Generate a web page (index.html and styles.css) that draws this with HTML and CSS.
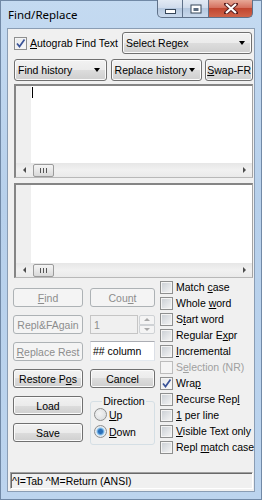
FILE: index.html
```html
<!DOCTYPE html>
<html lang="en">
<head>
  <meta charset="UTF-8">
  <meta name="viewport" content="width=device-width, initial-scale=1.0">
  <title>Find/Replace</title>
  <link rel="stylesheet" href="styles.css">
</head>
<body>
  <div class="window">
    <div class="titlebar">
      <span class="title">Find/Replace</span>
      <div class="caption">
        <span class="cap-btn cap-min">
          <svg width="11" height="5" viewBox="0 0 11 5"><rect x="0.5" y="0.5" width="10" height="4" fill="#fff" stroke="#364659"/></svg>
        </span>
        <span class="cap-btn cap-max">
          <svg width="12" height="10" viewBox="0 0 12 10"><rect x="0.5" y="0.5" width="11" height="9" fill="#364659"/><rect x="1.5" y="1.5" width="9" height="7" fill="#fff"/><rect x="3.5" y="4" width="5" height="3" fill="#5b6c80"/></svg>
        </span>
        <span class="cap-btn cap-close">
          <svg width="14" height="11" viewBox="0 0 14 11"><path d="M2 1 L12 10 M12 1 L2 10" stroke="#5a2020" stroke-width="4" stroke-linecap="square"/><path d="M2 1 L12 10 M12 1 L2 10" stroke="#fff" stroke-width="2.2"/></svg>
        </span>
      </div>
    </div>

    <div class="client">
      <div class="row-top">
        <label class="check">
          <span class="box checked"><svg width="11" height="11" viewBox="0 0 11 11"><path d="M2 5.5 L4.5 8.5 L9.5 1.5" fill="none" stroke="#3a5398" stroke-width="1.7"/></svg></span>
          <span><u>A</u>utograb Find Text</span>
        </label>
        <div class="combo combo-regex">Select Regex<span class="arrow"></span></div>
      </div>

      <div class="row-history">
        <div class="combo combo-find">Find history<span class="arrow"></span></div>
        <div class="combo combo-repl">Replace history<span class="arrow"></span></div>
        <div class="btn btn-swap"><span><u>S</u>wap-FR</span></div>
      </div>

      <div class="edit edit-find">
        <div class="edit-body">
          <div class="gutter"></div>
          <div class="text"><span class="caret"></span></div>
        </div>
        <div class="hscroll">
          <span class="sb-arrow"><span class="tri-left"></span></span>
          <span class="sb-thumb"><span class="grip"></span></span>
          <span class="sb-track"></span>
          <span class="sb-arrow"><span class="tri-right"></span></span>
        </div>
      </div>

      <div class="edit edit-repl">
        <div class="edit-body">
          <div class="gutter"></div>
          <div class="text"></div>
        </div>
        <div class="hscroll">
          <span class="sb-arrow"><span class="tri-left"></span></span>
          <span class="sb-thumb"><span class="grip"></span></span>
          <span class="sb-track"></span>
          <span class="sb-arrow"><span class="tri-right"></span></span>
        </div>
      </div>

      <div class="lower">
        <div class="actions">
          <div class="btn disabled"><span><u>F</u>ind</span></div>
          <div class="btn disabled"><span>Cou<u>n</u>t</span></div>

          <div class="btn disabled"><span>Repl&amp;FAgain</span></div>
          <div class="spinner">
            <span class="spin-input">1</span>
            <span class="spin-arrows">
              <span class="spin-up"><span class="tri-up"></span></span>
              <span class="spin-down"><span class="tri-down"></span></span>
            </span>
          </div>

          <div class="btn disabled"><span><u>R</u>eplace Rest</span></div>
          <div class="textbox">## column</div>

          <div class="btn"><span>Restore P<u>o</u>s</span></div>
          <div class="btn"><span>Cancel</span></div>

          <div class="btn"><span>Load</span></div>
          <fieldset class="direction">
            <legend>Direction</legend>
            <label class="radio"><span class="dot"></span><span><u>U</u>p</span></label>
            <label class="radio"><span class="dot selected"></span><span><u>D</u>own</span></label>
          </fieldset>

          <div class="btn"><span>Save</span></div>
        </div>

        <div class="options">
          <label class="check opt"><span class="box"></span><span>Match <u>c</u>ase</span></label>
          <label class="check opt"><span class="box"></span><span>Whole <u>w</u>ord</span></label>
          <label class="check opt"><span class="box"></span><span>S<u>t</u>art word</span></label>
          <label class="check opt"><span class="box"></span><span>Regular E<u>x</u>pr</span></label>
          <label class="check opt"><span class="box"></span><span><u>I</u>ncremental</span></label>
          <label class="check opt off"><span class="box"></span><span>S<u>e</u>lection (NR)</span></label>
          <label class="check opt"><span class="box checked"><svg width="11" height="11" viewBox="0 0 11 11"><path d="M2 5.5 L4.5 8.5 L9.5 1.5" fill="none" stroke="#3a5398" stroke-width="1.7"/></svg></span><span>Wra<u>p</u></span></label>
          <label class="check opt"><span class="box"></span><span>Recurse Rep<u>l</u></span></label>
          <label class="check opt"><span class="box"></span><span><u>1</u> per line</span></label>
          <label class="check opt"><span class="box"></span><span><u>V</u>isible Text only</span></label>
          <label class="check opt"><span class="box"></span><span>Repl <u>m</u>atch case</span></label>
        </div>
      </div>

      <div class="status">^I=Tab ^M=Return (ANSI)</div>
    </div>
  </div>
</body>
</html>
```

FILE: styles.css
```css
body {
  margin: 0;
  font-family: "Liberation Sans", Arial, sans-serif;
  font-size: 10.5px;
  color: #000;
}

u {
  text-underline-offset: 1px;
}

.window {
  width: 262px;
  height: 500px;
  box-sizing: border-box;
  display: flex;
  flex-direction: column;
  padding-bottom: 8px;
  background: linear-gradient(#c4daf1, #b7d0eb 40%, #bcd4ee);
  box-shadow: inset 0 0 0 1px #7189a6;
}

/* title bar */
.titlebar {
  height: 28px;
  flex: none;
  display: flex;
  align-items: flex-start;
}

.title {
  font-family: "Noto Sans", sans-serif;
  font-size: 11.5px;
  line-height: 14px;
  margin: 8px 0 0 8px;
}

.caption {
  display: flex;
  margin-left: auto;
  margin-right: 9px;
}

.cap-btn {
  height: 18px;
  box-sizing: border-box;
  display: flex;
  align-items: center;
  justify-content: center;
  border: 1px solid #5f7189;
  border-top: none;
}

.cap-min {
  width: 26px;
  border-radius: 0 0 0 5px;
  background: linear-gradient(#e2eaf4, #d0dcec 45%, #b5c8df 50%, #c9d9ec);
  padding-top: 5px;
}

.cap-max {
  width: 26px;
  border-left: none;
  background: linear-gradient(#e2eaf4, #d0dcec 45%, #b5c8df 50%, #c9d9ec);
}

.cap-close {
  width: 44px;
  border-left: none;
  border-radius: 0 0 5px 0;
  background: linear-gradient(#e7a897, #d5715f 45%, #c14630 50%, #d0654a);
}

/* client area */
.client {
  flex: 1;
  margin: 0 7px;
  border: 1px solid #8a9db4;
  background: #f0f0f0;
  display: flex;
  flex-direction: column;
  padding: 3px 1px 0 6px;
}

.row-top {
  display: flex;
  align-items: center;
  height: 22px;
}

.check {
  display: flex;
  align-items: center;
  gap: 3px;
}

.box {
  width: 13px;
  height: 13px;
  box-sizing: border-box;
  border: 1px solid #8e8f8f;
  background: linear-gradient(135deg, #c8cdd3, #f6f6f6);
  box-shadow: inset 0 0 0 1px #f4f4f4;
  display: flex;
  align-items: center;
  justify-content: center;
  flex: none;
}

.box.checked {
  background: linear-gradient(135deg, #e6e8ea, #fafafa);
}

.combo {
  height: 22px;
  box-sizing: border-box;
  display: flex;
  align-items: center;
  padding: 0 6px 0 3px;
  border: 1px solid #707070;
  border-radius: 3px;
  background: linear-gradient(#f2f2f2, #ebebeb 50%, #dddddd 50%, #cfcfcf);
  box-shadow: inset 0 0 0 1px #fbfbfb;
}

.arrow {
  margin-left: auto;
  width: 0;
  height: 0;
  border-left: 3.5px solid transparent;
  border-right: 3.5px solid transparent;
  border-top: 4px solid #000;
}

.combo-regex {
  margin-left: auto;
  margin-right: 1px;
  width: 130px;
}

.row-history {
  display: flex;
  height: 22px;
  margin-top: 5px;
}

.combo-find {
  width: 93px;
}

.combo-repl {
  width: 92px;
  margin-left: 4px;
}

.btn-swap {
  width: 48px;
  margin-left: 3px;
}

/* buttons */
.btn {
  box-sizing: border-box;
  display: flex;
  align-items: center;
  justify-content: center;
  border: 1px solid #707070;
  border-radius: 3px;
  background: linear-gradient(#f2f2f2, #ebebeb 50%, #dddddd 50%, #cfcfcf);
  box-shadow: inset 0 0 0 1px #fbfbfb;
  white-space: nowrap;
}

.btn.disabled {
  border-color: #adb2b5;
  background: #f4f4f4;
  box-shadow: none;
  color: #8d8d8d;
}

/* edit boxes */
.edit {
  box-sizing: border-box;
  display: flex;
  flex-direction: column;
  border-style: solid;
  border-width: 2px 1px 1px 2px;
  border-color: #858585 #a3a3a3 #b8b8b8 #858585;
  background: #fff;
}

.edit-find {
  height: 94px;
  margin-top: 3px;
}

.edit-repl {
  height: 95px;
  margin-top: 5px;
}

.edit-body {
  flex: 1;
  display: flex;
}

.gutter {
  width: 15px;
  background: #efefef;
}

.text {
  flex: 1;
}

.caret {
  display: block;
  width: 1px;
  height: 11px;
  margin: 1px 0 0 1px;
  background: #000;
}

.hscroll {
  height: 14px;
  display: flex;
  align-items: center;
  background: linear-gradient(#e6e6e6, #f1f1f1 50%, #eaeaea);
}

.sb-arrow {
  width: 16px;
  height: 14px;
  display: flex;
  align-items: center;
  justify-content: center;
}

.tri-left {
  border-top: 3px solid transparent;
  border-bottom: 3px solid transparent;
  border-right: 3px solid #4d4d4d;
}

.tri-right {
  border-top: 3px solid transparent;
  border-bottom: 3px solid transparent;
  border-left: 3px solid #4d4d4d;
}

.sb-thumb {
  width: 21px;
  height: 13px;
  margin-left: 1px;
  box-sizing: border-box;
  border: 1px solid #9b9b9b;
  border-radius: 2px;
  background: linear-gradient(#f4f4f4, #e8e8e8 50%, #d9d9d9);
  display: flex;
  align-items: center;
  justify-content: center;
}

.grip {
  width: 7px;
  height: 5px;
  background: repeating-linear-gradient(90deg, #555 0 1px, transparent 1px 3px);
}

.sb-track {
  flex: 1;
}

/* lower section */
.lower {
  display: flex;
  margin: 1px 0 0 -1px;
}

.actions {
  display: grid;
  grid-template-columns: 70px 65px;
  grid-auto-rows: 19px;
  column-gap: 7px;
  row-gap: 8px;
  padding-top: 9px;
}

.spinner {
  display: flex;
  gap: 1px;
}

.spin-input {
  width: 48px;
  box-sizing: border-box;
  border: 1px solid #c5c5c5;
  background: #f0f0f0;
  color: #8d8d8d;
  padding-left: 3px;
  display: flex;
  align-items: center;
}

.spin-arrows {
  width: 16px;
  display: flex;
  flex-direction: column;
}

.spin-up,
.spin-down {
  flex: 1;
  box-sizing: border-box;
  border: 1px solid #cfd2d5;
  background: #f4f4f4;
  display: flex;
  align-items: center;
  justify-content: center;
}

.spin-up {
  border-radius: 2px 2px 0 0;
}

.spin-down {
  border-radius: 0 0 2px 2px;
}

.tri-up {
  border-left: 3px solid transparent;
  border-right: 3px solid transparent;
  border-bottom: 3px solid #a8a8a8;
}

.tri-down {
  border-left: 3px solid transparent;
  border-right: 3px solid transparent;
  border-top: 3px solid #a8a8a8;
}

.textbox {
  box-sizing: border-box;
  height: 20px;
  margin-top: -1px;
  border: 1px solid #abadb3;
  border-color: #abadb3 #dbdfe6 #e3e9ef #e2e3ea;
  background: #fff;
  padding-left: 2px;
  display: flex;
  align-items: center;
}

.direction {
  grid-row: span 2;
  margin: 0;
  padding: 0 0 4px 3px;
  border: 1px solid #d5dfe5;
  border-radius: 3px;
  min-width: 0;
  align-self: start;
}

.direction legend {
  margin: 0 auto;
  padding: 0 1px;
  line-height: 10px;
}

.radio {
  display: flex;
  align-items: center;
  gap: 2px;
  height: 17px;
}

.dot {
  width: 13px;
  height: 13px;
  box-sizing: border-box;
  border-radius: 50%;
  border: 1px solid #8e8f8f;
  background: radial-gradient(circle at 40% 40%, #f4f4f4, #d5d8db);
}

.dot.selected {
  background: radial-gradient(circle, #2b6fb8 0 2px, #8ac4ee 3.5px, #e9eef3 4.5px, #d5d8db);
}

.options {
  margin-left: 5px;
}

.opt {
  height: 16px;
  white-space: nowrap;
}

.opt.off {
  color: #a0a0a0;
}

.opt.off .box {
  border-color: #bcbcbc;
  background: #f4f4f4;
}

/* status line */
.status {
  margin: auto 0 2px -4px;
  height: 17px;
  box-sizing: border-box;
  border: 1px solid;
  border-color: #a0a0a0 #ffffff #ffffff #a0a0a0;
  box-shadow: inset 1px 1px 0 #696969;
  padding-left: 1px;
  display: flex;
  align-items: center;
  white-space: nowrap;
}
```
